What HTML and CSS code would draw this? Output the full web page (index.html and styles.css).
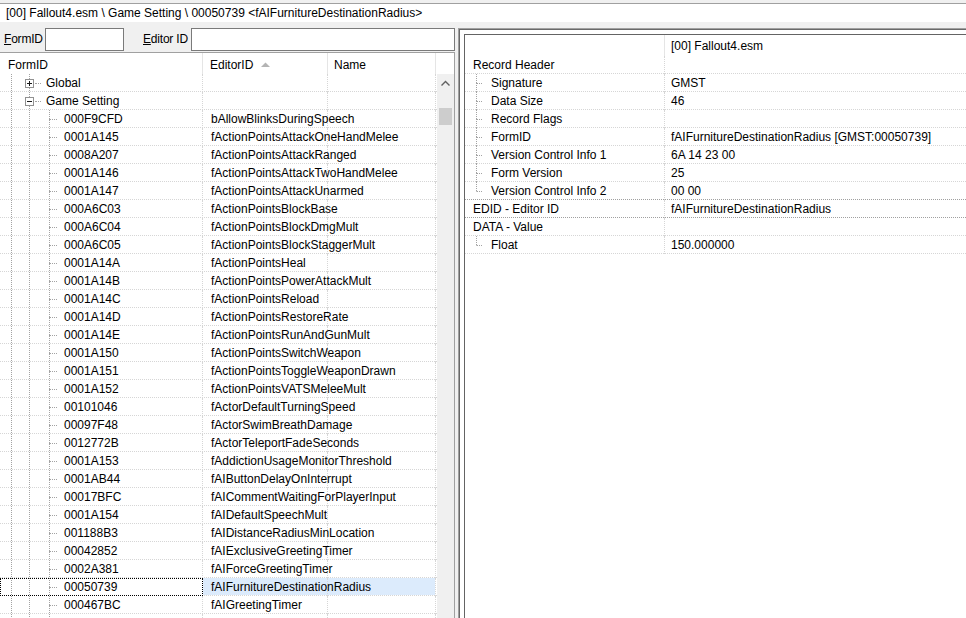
FILE: index.html
```html
<!DOCTYPE html>
<html>
<head>
<meta charset="utf-8">
<link rel="stylesheet" href="styles.css">
</head>
<body>
<div class="pathbar">[00] Fallout4.esm \ Game Setting \ 00050739 &lt;fAIFurnitureDestinationRadius&gt;</div>
<div class="main">
  <div class="left">
    <div class="filters">
      <span class="flabel fl-form"><u>F</u>ormID</span><span class="input in-form"></span>
      <span class="flabel fl-edid"><u>E</u>ditor ID</span><span class="input in-edid"></span>
    </div>
    <div class="list">
      <div class="lhead">
        <div class="hc c1">FormID</div>
        <div class="hc c2">EditorID<svg class="sort" width="9" height="5" viewBox="0 0 9 5"><polygon points="0,5 4.5,0.5 9,5" fill="#b4b4b4"/></svg></div>
        <div class="hc c3">Name</div>
        <div class="hc c4"></div>
      </div>
      <div class="lbody">
        <div class="rows">
          <div class="row group"><div class="cell c1"><svg class="box" width="9" height="9" viewBox="0 0 9 9"><rect x="0.5" y="0.5" width="8" height="8" fill="#fff" stroke="#919191"/><path d="M2 4.5H7M4.5 2V7" stroke="#1a1a1a"/></svg><span class="stub gstub"></span><span class="txt gtxt">Global</span></div><div class="cell c2"></div><div class="cell c3"></div></div>
          <div class="row group"><div class="cell c1"><svg class="box" width="9" height="9" viewBox="0 0 9 9"><rect x="0.5" y="0.5" width="8" height="8" fill="#fff" stroke="#919191"/><path d="M2 4.5H7" stroke="#1a1a1a"/></svg><span class="stub gstub"></span><span class="txt gtxt">Game Setting</span></div><div class="cell c2"></div><div class="cell c3"></div></div>
          <div class="row item"><div class="cell c1"><span class="stub istub"></span><span class="txt itxt">000F9CFD</span></div><div class="cell c2">bAllowBlinksDuringSpeech</div><div class="cell c3"></div></div>
          <div class="row item"><div class="cell c1"><span class="stub istub"></span><span class="txt itxt">0001A145</span></div><div class="cell c2">fActionPointsAttackOneHandMelee</div><div class="cell c3"></div></div>
          <div class="row item"><div class="cell c1"><span class="stub istub"></span><span class="txt itxt">0008A207</span></div><div class="cell c2">fActionPointsAttackRanged</div><div class="cell c3"></div></div>
          <div class="row item"><div class="cell c1"><span class="stub istub"></span><span class="txt itxt">0001A146</span></div><div class="cell c2">fActionPointsAttackTwoHandMelee</div><div class="cell c3"></div></div>
          <div class="row item"><div class="cell c1"><span class="stub istub"></span><span class="txt itxt">0001A147</span></div><div class="cell c2">fActionPointsAttackUnarmed</div><div class="cell c3"></div></div>
          <div class="row item"><div class="cell c1"><span class="stub istub"></span><span class="txt itxt">000A6C03</span></div><div class="cell c2">fActionPointsBlockBase</div><div class="cell c3"></div></div>
          <div class="row item"><div class="cell c1"><span class="stub istub"></span><span class="txt itxt">000A6C04</span></div><div class="cell c2">fActionPointsBlockDmgMult</div><div class="cell c3"></div></div>
          <div class="row item"><div class="cell c1"><span class="stub istub"></span><span class="txt itxt">000A6C05</span></div><div class="cell c2">fActionPointsBlockStaggerMult</div><div class="cell c3"></div></div>
          <div class="row item"><div class="cell c1"><span class="stub istub"></span><span class="txt itxt">0001A14A</span></div><div class="cell c2">fActionPointsHeal</div><div class="cell c3"></div></div>
          <div class="row item"><div class="cell c1"><span class="stub istub"></span><span class="txt itxt">0001A14B</span></div><div class="cell c2">fActionPointsPowerAttackMult</div><div class="cell c3"></div></div>
          <div class="row item"><div class="cell c1"><span class="stub istub"></span><span class="txt itxt">0001A14C</span></div><div class="cell c2">fActionPointsReload</div><div class="cell c3"></div></div>
          <div class="row item"><div class="cell c1"><span class="stub istub"></span><span class="txt itxt">0001A14D</span></div><div class="cell c2">fActionPointsRestoreRate</div><div class="cell c3"></div></div>
          <div class="row item"><div class="cell c1"><span class="stub istub"></span><span class="txt itxt">0001A14E</span></div><div class="cell c2">fActionPointsRunAndGunMult</div><div class="cell c3"></div></div>
          <div class="row item"><div class="cell c1"><span class="stub istub"></span><span class="txt itxt">0001A150</span></div><div class="cell c2">fActionPointsSwitchWeapon</div><div class="cell c3"></div></div>
          <div class="row item"><div class="cell c1"><span class="stub istub"></span><span class="txt itxt">0001A151</span></div><div class="cell c2">fActionPointsToggleWeaponDrawn</div><div class="cell c3"></div></div>
          <div class="row item"><div class="cell c1"><span class="stub istub"></span><span class="txt itxt">0001A152</span></div><div class="cell c2">fActionPointsVATSMeleeMult</div><div class="cell c3"></div></div>
          <div class="row item"><div class="cell c1"><span class="stub istub"></span><span class="txt itxt">00101046</span></div><div class="cell c2">fActorDefaultTurningSpeed</div><div class="cell c3"></div></div>
          <div class="row item"><div class="cell c1"><span class="stub istub"></span><span class="txt itxt">00097F48</span></div><div class="cell c2">fActorSwimBreathDamage</div><div class="cell c3"></div></div>
          <div class="row item"><div class="cell c1"><span class="stub istub"></span><span class="txt itxt">0012772B</span></div><div class="cell c2">fActorTeleportFadeSeconds</div><div class="cell c3"></div></div>
          <div class="row item"><div class="cell c1"><span class="stub istub"></span><span class="txt itxt">0001A153</span></div><div class="cell c2">fAddictionUsageMonitorThreshold</div><div class="cell c3"></div></div>
          <div class="row item"><div class="cell c1"><span class="stub istub"></span><span class="txt itxt">0001AB44</span></div><div class="cell c2">fAIButtonDelayOnInterrupt</div><div class="cell c3"></div></div>
          <div class="row item"><div class="cell c1"><span class="stub istub"></span><span class="txt itxt">00017BFC</span></div><div class="cell c2">fAICommentWaitingForPlayerInput</div><div class="cell c3"></div></div>
          <div class="row item"><div class="cell c1"><span class="stub istub"></span><span class="txt itxt">0001A154</span></div><div class="cell c2">fAIDefaultSpeechMult</div><div class="cell c3"></div></div>
          <div class="row item"><div class="cell c1"><span class="stub istub"></span><span class="txt itxt">001188B3</span></div><div class="cell c2">fAIDistanceRadiusMinLocation</div><div class="cell c3"></div></div>
          <div class="row item"><div class="cell c1"><span class="stub istub"></span><span class="txt itxt">00042852</span></div><div class="cell c2">fAIExclusiveGreetingTimer</div><div class="cell c3"></div></div>
          <div class="row item"><div class="cell c1"><span class="stub istub"></span><span class="txt itxt">0002A381</span></div><div class="cell c2">fAIForceGreetingTimer</div><div class="cell c3"></div></div>
          <div class="row item selected"><div class="cell c1"><span class="stub istub"></span><span class="txt itxt">00050739</span></div><div class="cell c2">fAIFurnitureDestinationRadius</div><div class="cell c3"></div></div>
          <div class="row item"><div class="cell c1"><span class="stub istub"></span><span class="txt itxt">000467BC</span></div><div class="cell c2">fAIGreetingTimer</div><div class="cell c3"></div></div>
          <div class="row item"><div class="cell c1"><span class="stub istub"></span><span class="txt itxt"></span></div><div class="cell c2"></div><div class="cell c3"></div></div>
        </div>
        <div class="vscroll">
          <div class="sb-up"><svg width="9" height="6" viewBox="0 0 9 6"><path d="M0.5 5.5L4.5 1.5L8.5 5.5" fill="none" stroke="#606060" stroke-width="1.4"/></svg></div>
          <div class="sb-thumb"></div>
        </div>
      </div>
    </div>
  </div>
  <div class="splitter"></div>
  <div class="right">
    <div class="right-in">
      <div class="vtree">
        <div class="vhead"><div class="vh1"></div><div class="vh2">[00] Fallout4.esm</div></div>
        <div class="vrow"><div class="vc1 top">Record Header</div><div class="vc2"></div></div>
        <div class="vrow"><div class="vc1 child"><span class="guide"><span class="gt"></span><span class="gb"></span></span><span class="vtxt">Signature</span></div><div class="vc2">GMST</div></div>
        <div class="vrow"><div class="vc1 child"><span class="guide"><span class="gt"></span><span class="gb"></span></span><span class="vtxt">Data Size</span></div><div class="vc2">46</div></div>
        <div class="vrow"><div class="vc1 child"><span class="guide"><span class="gt"></span><span class="gb"></span></span><span class="vtxt">Record Flags</span></div><div class="vc2"></div></div>
        <div class="vrow"><div class="vc1 child"><span class="guide"><span class="gt"></span><span class="gb"></span></span><span class="vtxt">FormID</span></div><div class="vc2">fAIFurnitureDestinationRadius [GMST:00050739]</div></div>
        <div class="vrow"><div class="vc1 child"><span class="guide"><span class="gt"></span><span class="gb"></span></span><span class="vtxt">Version Control Info 1</span></div><div class="vc2">6A 14 23 00</div></div>
        <div class="vrow"><div class="vc1 child"><span class="guide"><span class="gt"></span><span class="gb"></span></span><span class="vtxt">Form Version</span></div><div class="vc2">25</div></div>
        <div class="vrow sep"><div class="vc1 child last"><span class="guide"><span class="gt"></span><span class="gb"></span></span><span class="vtxt">Version Control Info 2</span></div><div class="vc2">00 00</div></div>
        <div class="vrow sep"><div class="vc1 top">EDID - Editor ID</div><div class="vc2">fAIFurnitureDestinationRadius</div></div>
        <div class="vrow"><div class="vc1 top">DATA - Value</div><div class="vc2"></div></div>
        <div class="vrow"><div class="vc1 child last"><span class="guide"><span class="gt"></span><span class="gb"></span></span><span class="vtxt">Float</span></div><div class="vc2">150.000000</div></div>
      </div>
    </div>
  </div>
</div>
</body>
</html>
```

FILE: styles.css
```css
* { box-sizing: border-box; }

html, body {
  margin: 0;
  padding: 0;
}

body {
  width: 966px;
  height: 618px;
  overflow: hidden;
  background: #f0f0f0;
  font-family: "Liberation Sans", Arial, sans-serif;
  font-size: 12px;
  color: #000;
}

.pathbar {
  margin-top: 3px;
  height: 19px;
  border-top: 1px solid #a0a0a0;
  background: #fff;
  padding-left: 6px;
  line-height: 18px;
  white-space: nowrap;
}

.main {
  display: flex;
  height: 596px;
}

/* ---------- left pane ---------- */
.left {
  width: 455px;
  flex: none;
  display: flex;
  flex-direction: column;
}

.filters {
  display: flex;
  align-items: center;
  height: 30px;
  padding-top: 6px;
  padding-bottom: 1px;
  flex: none;
}

.flabel {
  white-space: nowrap;
  line-height: 23px;
  letter-spacing: -0.2px;
}
.fl-form { width: 45px; padding-left: 4px; }
.fl-edid { width: 48px; margin-left: 19px; }

.input {
  display: block;
  height: 23px;
  background: #fff;
  border: 1px solid #7a7a7a;
}
.in-form { width: 79px; }
.in-edid { flex: 1; }

.list {
  flex: 1;
  min-height: 0;
  border-top: 1px solid #a0a0a0;
  border-right: 1px solid #a0a0a0;
  background: #fff;
  display: flex;
  flex-direction: column;
}

.lhead {
  display: flex;
  height: 21px;
  flex: none;
}
.hc {
  height: 21px;
  padding-top: 3px;
  border-right: 1px solid #e5e5e5;
  white-space: nowrap;
  display: flex;
  align-items: center;
}
.hc.c1 { width: 203px; padding-left: 8px; }
.hc.c2 { width: 125px; padding-left: 7px; }
.hc.c3 { width: 108px; padding-left: 6px; }
.hc.c4 { flex: 1; border-right: none; }
.sort { margin-left: 8px; margin-top: -2px; }

.lbody {
  flex: 1;
  min-height: 0;
  display: flex;
  overflow: hidden;
}
.rows {
  width: 437px;
  flex: none;
}

.row {
  display: flex;
  height: 18px;
  background-image: linear-gradient(to right, #d6d6d6 50%, transparent 50%);
  background-size: 2px 1px;
  background-repeat: repeat-x;
  background-position: 0 100%;
}
.row.selected {
  background-image:
    linear-gradient(to right, #d6d6d6 50%, transparent 50%),
    linear-gradient(#dcebfc, #dcebfc);
  background-size: 2px 1px, 232px 17px;
  background-repeat: repeat-x, no-repeat;
  background-position: 0 100%, 203px 0;
}
.cell {
  height: 18px;
  line-height: 18px;
  white-space: nowrap;
  border-right: 1px dotted #d6d6d6;
}
.row .c1 {
  width: 203px;
  display: flex;
  align-items: center;
  overflow: hidden;
  background-image:
    linear-gradient(#a3a3a3 50%, transparent 50%),
    linear-gradient(#a3a3a3 50%, transparent 50%);
  background-size: 1px 2px;
  background-repeat: repeat-y;
  background-position: 11px 0, 29px 0;
}
.row.item .c1 {
  background-image:
    linear-gradient(#a3a3a3 50%, transparent 50%),
    linear-gradient(#a3a3a3 50%, transparent 50%),
    linear-gradient(#a3a3a3 50%, transparent 50%);
  background-position: 11px 0, 29px 0, 49px 0;
  padding-left: 49px;
}
.row.group .c1 { padding-left: 25px; }
.row .c2 { width: 125px; padding-left: 8px; overflow: visible; position: relative; z-index: 1; }
.row .c3 { width: 108px; }

.box { flex: none; display: block; }
.stub {
  display: block;
  height: 0;
  border-top: 1px dotted #a3a3a3;
  flex: none;
}
.gstub { width: 6px; margin-left: 1px; }
.istub { width: 8px; }
.gtxt { margin-left: 5px; }
.itxt { margin-left: 7px; }

.row.selected .c1 {
  outline: 1px dotted #000;
  outline-offset: -1px;
}

.vscroll {
  width: 17px;
  flex: none;
  background: #f0f0f0;
}
.sb-up {
  height: 17px;
  display: flex;
  align-items: center;
  justify-content: center;
}
.sb-thumb {
  margin: 17px 2px 0 2px;
  height: 17px;
  background: #cdcdcd;
}

/* ---------- splitter ---------- */
.splitter {
  width: 3px;
  flex: none;
}

/* ---------- right pane ---------- */
.right {
  flex: 1;
  margin-top: 6px;
  border-top: 1px solid #a0a0a0;
  border-left: 1px solid #a0a0a0;
  min-width: 0;
}
.right-in {
  height: 100%;
  border-top: 1px solid #696969;
  border-left: 1px solid #696969;
  padding: 4px 0 0 4px;
  background: #fff;
}
.vtree {
  height: 100%;
  border-top: 1px solid #646464;
  border-left: 1px solid #646464;
  background: #fff;
}

.vhead {
  display: flex;
  height: 21px;
}
.vh1 {
  width: 200px;
  border-right: 1px solid #e5e5e5;
}
.vh2 {
  padding-left: 6px;
  line-height: 22px;
  white-space: nowrap;
}

.vrow {
  display: flex;
  height: 18px;
  line-height: 18px;
  white-space: nowrap;
  background-image: linear-gradient(to right, #d6d6d6 50%, transparent 50%);
  background-size: 2px 1px;
  background-repeat: repeat-x;
  background-position: 0 100%;
}
.vrow.sep {
  background-image: linear-gradient(to right, #a0a0a0 50%, transparent 50%);
}
.vc1 {
  width: 200px;
  flex: none;
  display: flex;
  align-items: center;
  border-right: 1px dotted #d6d6d6;
}
.vc1.top { padding-left: 8px; }
.vc1.child { padding-left: 11px; }
.vc2 { padding-left: 6px; }

.guide {
  width: 6px;
  height: 18px;
  display: flex;
  flex-direction: column;
  flex: none;
}
.gt {
  height: 9px;
  border-left: 1px dotted #a3a3a3;
}
.gb {
  flex: 1;
  border-left: 1px dotted #a3a3a3;
  border-top: 1px dotted #a3a3a3;
}
.last .gb { border-left-color: transparent; }
.vtxt { margin-left: 9px; }
```
